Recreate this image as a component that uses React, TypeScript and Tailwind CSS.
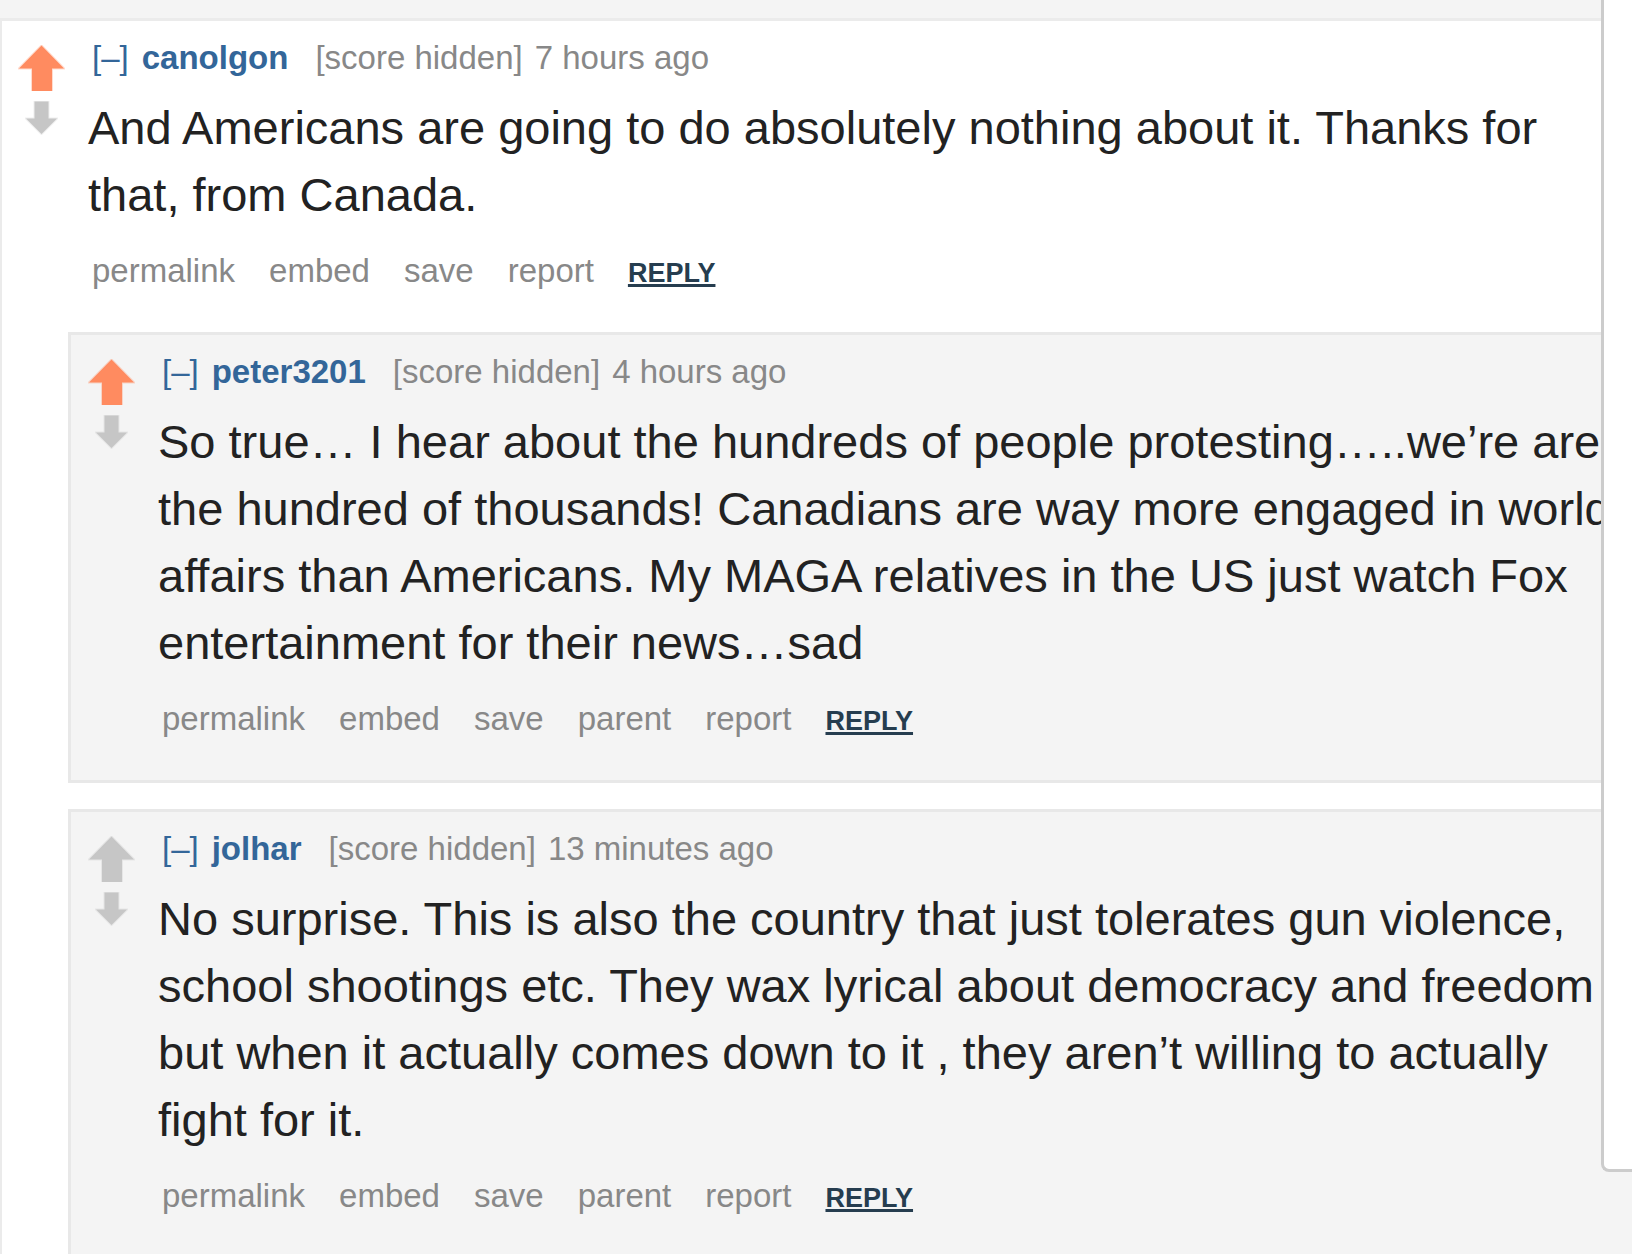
import { useState } from 'react'
import clsx from 'clsx'

type CommentItem = {
  id: string
  author: string
  age: string
  upvoted: boolean
  body: string
  actions: string[]
  replies?: CommentItem[]
}

const THREAD: CommentItem = {
  id: 'canolgon',
  author: 'canolgon',
  age: '7 hours ago',
  upvoted: true,
  body: 'And Americans are going to do absolutely nothing about it. Thanks for that, from Canada.',
  actions: ['permalink', 'embed', 'save', 'report'],
  replies: [
    {
      id: 'peter3201',
      author: 'peter3201',
      age: '4 hours ago',
      upvoted: true,
      body: 'So true… I hear about the hundreds of people protesting…..we’re are the hundred of thousands! Canadians are way more engaged in world affairs than Americans. My MAGA relatives in the US just watch Fox entertainment for their news…sad',
      actions: ['permalink', 'embed', 'save', 'parent', 'report']
    },
    {
      id: 'jolhar',
      author: 'jolhar',
      age: '13 minutes ago',
      upvoted: false,
      body: 'No surprise. This is also the country that just tolerates gun violence, school shootings etc. They wax lyrical about democracy and freedom but when it actually comes down to it , they aren’t willing to actually fight for it.',
      actions: ['permalink', 'embed', 'save', 'parent', 'report']
    }
  ]
}

const VoteArrows = ({ initial }: { initial: boolean }) => {
  const [upvoted, setUpvoted] = useState(initial)

  return (
    <div className="flex w-[47px] shrink-0 flex-col items-center gap-[10px] pt-[7px]">
      <button type="button" aria-label="upvote" aria-pressed={upvoted} onClick={() => setUpvoted(!upvoted)}>
        <svg
          width="47"
          height="46"
          viewBox="0 0 47 46"
          strokeWidth="2"
          strokeOpacity="0.3"
          className={clsx('block', upvoted ? 'fill-[#ff8b60] stroke-[#ff8b60]' : 'fill-[#c6c6c6] stroke-[#c6c6c6]')}>
          <path d="M23.5 0.5 L46 23.5 H34 V47 H14 V23.5 H1 Z" />
        </svg>
      </button>
      <button type="button" aria-label="downvote" onClick={() => setUpvoted(false)}>
        <svg
          width="33"
          height="34"
          viewBox="0 0 33 34"
          strokeWidth="2"
          strokeOpacity="0.3"
          className="block fill-[#c6c6c6] stroke-[#c6c6c6]">
          <path d="M9.5 0.5 H23.5 V17.5 H32 L16.5 33 L1 17.5 H9.5 Z" />
        </svg>
      </button>
    </div>
  )
}

const Entry = ({ item }: { item: CommentItem }) => (
  <div className="flex gap-[23px] pr-5">
    <VoteArrows initial={item.upvoted} />
    <div className="min-w-0 flex-1">
      <p className="flex pl-1 text-[33px] leading-[40px] text-[#888888]">
        <a href="#collapse" className="mr-[13px] text-[#336699]">
          [–]
        </a>
        <a href={`#${item.author}`} className="mr-[27px] font-bold text-[#336699]">
          {item.author}
        </a>
        <span className="mr-3">[score hidden]</span>
        <time>{item.age}</time>
      </p>
      <p className="mt-4 text-[47px] leading-[67px] text-[#222222]">{item.body}</p>
      <ul className="mt-[23px] flex items-baseline gap-[34px] pl-1 text-[33px] leading-[40px] text-[#888888]">
        {item.actions.map((action) => (
          <li key={action}>
            <a href={`#${action}`}>{action}</a>
          </li>
        ))}
        <li>
          <button
            type="button"
            className="text-[27px] leading-[40px] font-bold text-[#263d4f] underline decoration-[3px] underline-offset-2">
            REPLY
          </button>
        </li>
      </ul>
    </div>
  </div>
)

const Reply = ({ item }: { item: CommentItem }) => (
  <article className="border-[3px] border-r-0 border-[#e8e8e8] bg-[#f4f4f4] pt-[17px] pb-[39px] pl-[17px]">
    <Entry item={item} />
  </article>
)

export default function App() {
  return (
    <div className="relative h-screen overflow-hidden bg-white font-['Liberation_Sans',Arial,sans-serif]">
      <div className="h-[18px] bg-[#f4f4f4]" />
      <main className="border-t-[3px] border-l-2 border-[#ebebeb] pt-[17px] pl-4">
        <Entry item={THREAD} />
        <section aria-label="Replies" className="mt-[39px] ml-[50px] flex flex-col gap-[26px]">
          {THREAD.replies?.map((reply) => (
            <Reply key={reply.id} item={reply} />
          ))}
        </section>
      </main>

      {/* Edge of the sidebar that overlaps the thread */}
      <aside
        aria-label="Sidebar"
        className="absolute top-0 right-0 h-[1172px] w-[31px] rounded-bl-lg border-b-[3px] border-l-[3px] border-[#cccccc] bg-white"
      />
    </div>
  )
}
